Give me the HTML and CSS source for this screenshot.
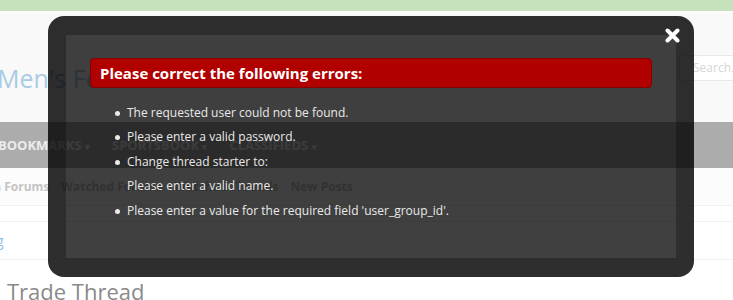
FILE: index.html
```html
<!DOCTYPE html>
<html lang="en">
<head>
  <meta charset="UTF-8">
  <title>Men's Forum</title>
  <link rel="stylesheet" href="styles.css">
</head>
<body>
  <div class="topbar"></div>

  <div class="cabecera">
    <div class="logo">Men's Forum</div>
    <div class="buscar">Search...</div>
  </div>

  <div class="navbar">
    <span class="nav-item">BOOKMARKS <small>▾</small></span>
    <span class="nav-item">SPORTSBOOK <small>▾</small></span>
    <span class="nav-item">CLASSIFIEDS <small>▾</small></span>
  </div>

  <div class="subnav">
    <span class="sub-item">Main Forums</span>
    <span class="sub-item">Watched Forums</span>
    <span class="sub-item">Watched Threads</span>
    <span class="sub-item">New Posts</span>
  </div>

  <div class="separador"></div>

  <div class="migas">
    <a class="miga">Blog</a>
  </div>

  <h1 class="titulo">Trade Thread</h1>

  <div class="overlay">
    <a class="cerrar">
      <svg width="15" height="15" viewBox="0 0 15 15">
        <path d="M2.5 2.5 L12.5 12.5 M12.5 2.5 L2.5 12.5" stroke="#fff" stroke-width="4" stroke-linecap="round"/>
      </svg>
    </a>
    <div class="errores-titulo">Please correct the following errors:</div>
    <ul class="errores">
      <li>The requested user could not be found.</li>
      <li>Please enter a valid password.</li>
      <li>Change thread starter to:
        <div class="sub-error">Please enter a valid name.</div>
      </li>
      <li>Please enter a value for the required field 'user_group_id'.</li>
    </ul>
  </div>
</body>
</html>
```

FILE: styles.css
```css
body {
  margin: 0;
  padding: 0;
  background-color: #ffffff;
  font-family: "Open Sans", "Liberation Sans", sans-serif;
  overflow: hidden;
}

.topbar {
  height: 11px;
  background-color: #c6e2bd;
}

.cabecera {
  height: 109px;
  border-top: 2px solid #ffffff;
  background-color: #f9f9f9;
  display: flex;
  justify-content: space-between;
  align-items: flex-start;
}

.logo {
  margin-top: 48px;
  margin-left: -3px;
  font-size: 25px;
  color: #a9cbe6;
}

.buscar {
  margin-top: 42px;
  width: 40px;
  height: 24px;
  padding-left: 13px;
  line-height: 24px;
  font-size: 12px;
  color: #d6d6d6;
  background-color: #ffffff;
  border: 1px solid #e8e8e8;
  border-right: none;
}

.navbar {
  height: 46px;
  background-color: #acacac;
  display: flex;
  align-items: center;
  gap: 22px;
  margin-left: -2px;
}

.nav-item {
  font-size: 13px;
  font-weight: bold;
  color: #ececec;
}

.nav-item small {
  font-size: 9px;
}

.subnav {
  height: 37px;
  background-color: #fcfcfc;
  border-bottom: 1px solid #efefef;
  display: flex;
  align-items: center;
  gap: 12px;
  margin-left: -29px;
}

.sub-item {
  font-size: 12px;
  font-weight: bold;
  color: #c4c4c4;
}

.separador {
  height: 15px;
  border-bottom: 1px solid #f0f0f0;
}

.migas {
  height: 37px;
  border-bottom: 1px solid #f0f0f0;
  display: flex;
  align-items: center;
  margin-left: -25px;
}

.miga {
  font-size: 14px;
  color: #8dbde3;
}

.titulo {
  margin: 16px 0 0 7px;
  font-size: 22px;
  font-weight: normal;
  color: #8a8a8a;
}

/* ventana de errores */
.overlay {
  position: absolute;
  left: 48px;
  top: 16px;
  width: 562px;
  height: 200px;
  padding: 23px 24px 0 24px;
  border: 19px solid rgba(0, 0, 0, 0.82);
  border-left-width: 18px;
  border-right-width: 18px;
  border-radius: 16px;
  background-color: rgba(0, 0, 0, 0.75);
  background-clip: padding-box;
}

.cerrar {
  position: absolute;
  top: -7px;
  right: -4px;
  display: block;
  width: 15px;
  height: 15px;
}

.cerrar svg {
  display: block;
}

.errores-titulo {
  height: 28px;
  line-height: 28px;
  padding-left: 9px;
  background-color: #b10000;
  border: 1px solid #820000;
  border-radius: 4px;
  color: #ffffff;
  font-size: 15px;
  font-weight: bold;
}

.errores {
  list-style: none;
  margin: 13px 0 0 0;
  padding: 0 0 0 37px;
  color: #eaeaea;
  font-size: 12px;
  line-height: 24.4px;
}

.errores li {
  position: relative;
}

.errores li::before {
  content: "";
  position: absolute;
  left: -12px;
  top: 10px;
  width: 5px;
  height: 5px;
  border-radius: 50%;
  background-color: #eaeaea;
}
```
